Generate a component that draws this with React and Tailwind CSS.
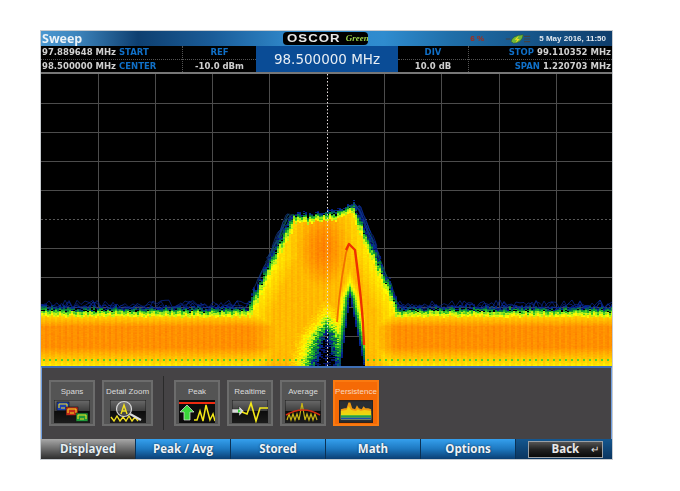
import React from "react";

const DV = "font-['DejaVu_Sans',sans-serif]";
const OS = "font-['Open_Sans',sans-serif]";

function rng(seed) {
  let s = seed;
  return () => {
    s = (s * 1664525 + 1013904223) % 4294967296;
    return s / 4294967296;
  };
}
const lerp = (a, b, t) => a + (b - a) * t;
const clamp = (v, a, b) => Math.max(a, Math.min(b, v));

const STOPS = [
  [0.03, [4, 14, 90]],
  [0.1, [6, 40, 150]],
  [0.17, [8, 120, 60]],
  [0.25, [40, 190, 40]],
  [0.32, [170, 240, 30]],
  [0.4, [255, 250, 0]],
  [0.5, [255, 222, 0]],
  [0.68, [255, 185, 0]],
  [0.85, [255, 150, 0]],
  [1, [252, 118, 0]],
];
function colour(t) {
  for (let i = 1; i < STOPS.length; i++) {
    if (t <= STOPS[i][0]) {
      const [a, ca] = STOPS[i - 1];
      const [b, cb] = STOPS[i];
      const k = clamp((t - a) / (b - a), 0, 1);
      return `rgb(${Math.round(lerp(ca[0], cb[0], k))},${Math.round(lerp(ca[1], cb[1], k))},${Math.round(lerp(ca[2], cb[2], k))})`;
    }
  }
  return "rgb(252,118,0)";
}

function redX(y) {
  const pts = [[244, 349], [250, 355], [323, 363], [366, 364]];
  if (y < 244) return 349;
  for (let i = 1; i < pts.length; i++) {
    if (y <= pts[i][0]) {
      const k = (y - pts[i - 1][0]) / (pts[i][0] - pts[i - 1][0]);
      return lerp(pts[i - 1][1], pts[i][1], k);
    }
  }
  return 364;
}

function envelope(x) {
  let top = 311;
  if (x > 247 && x <= 293) top = lerp(311, 217, (x - 247) / 46);
  else if (x > 293 && x <= 335) top = lerp(217, 214, (x - 293) / 42) + ((x % 7) / 7) * 3;
  else if (x > 335 && x <= 352) top = lerp(214, 207, (x - 335) / 17);
  else if (x > 352 && x <= 397) top = lerp(207, 311, (x - 352) / 45);
  return top;
}

function buildCells() {
  const r = rng(7);
  const buckets = {};
  for (let x = 41; x < 612; x += 2) {
    const slope = (x > 247 && x < 293) || (x > 352 && x < 397);
    const top = envelope(x) + (r() - 0.5) * (slope ? 5 : 2.5);
    const k0 = slope ? 2 : 1;
    const reach = (slope ? 13 : 7) * (0.35 + 0.65 * r());
    for (let y = 198; y < 366; y += 1) {
      let t;
      const n = r();
      const depth = y - top;
      if (depth < 0) {
        const k = -depth / reach;
        if (k > 1) continue;
        if (n < 0.15) continue;
        t = lerp(0.24, 0.05, k) + (n - 0.5) * 0.08;
      } else {
        let floor = 0;
        const fd = y - 311;
        if (fd >= 0) {
          let a;
          if (fd < 15) a = lerp(0.42, 0.86, fd / 15);
          else if (fd < 36) a = 0.88;
          else a = lerp(0.88, 0.46, (fd - 36) / 18);
          let att = 1;
          if (x > 250 && x < 300) att = lerp(1, 0.55, (x - 250) / 50);
          else if (x >= 300 && x <= 365) att = 0.55;
          else if (x > 365 && x < 395) att = lerp(0.55, 1, (x - 365) / 30);
          floor = a * att;
        }
        let body = 0;
        if (x > 247 && x < 397) {
          const lx = y < 311 ? x - (247 + (311 - y) * (46 / 94)) : x - 247;
          const rx = y < 311 ? 397 - (311 - y) * (45 / 104) - x : 397 - x;
          const d = Math.max(Math.min(lx, rx), 0);
          body = 0.4 + Math.min(d, 25) * 0.011;
          const cx = Math.exp(-((x - 322) ** 2) / 800 - ((y - 248) ** 2) / 2200);
          body = Math.max(body, 0.45 + cx * 0.48);
        }
        t = Math.max(floor, body);
        if (depth < 2.5 * k0) t = Math.min(t, 0.3);
        else if (depth < 5 * k0) t = Math.min(t, 0.38);
        const stripe = Math.sin((x / 6.3) * Math.PI * 2) * 0.04;
        t += stripe + (n - 0.5) * 0.05;

        if (y > 262 && x < redX(y) + 1) {
          const xL = 349 - (y - 297) * 0.132;
          const xR = 349 + (y - 297) * 0.206;
          let dx = Math.max(xL - x, x - xR);
          if (y < 297) dx = Math.abs(x - 349) + (297 - y) * 0.42;
          if (dx < 0) t = 0;
          else t = Math.min(t, 0.06 + dx * 0.05 + (n - 0.5) * 0.05);
        }
        if (y > 300) {
          const xL = 325 - (y - 335) * 0.3;
          const xR = 325 + (y - 335) * 0.3;
          let dx = Math.max(xL - x, x - xR);
          if (y < 335) dx = Math.abs(x - 326) + (335 - y) * 0.8;
          if (dx < 0) t = n < 0.35 ? 0.06 : 0;
          else t = Math.min(t, 0.05 + dx * 0.021 + (n - 0.5) * 0.16);
        }
        if (y >= 359 && y < 361 && x % 6 < 2 && t > 0.3) t = 0.28;
      }
      if (t < 0.03) continue;
      const key = Math.round(clamp(t, 0, 1) * 40);
      (buckets[key] = buckets[key] || []).push(`M${x} ${y}h2v1h-2z`);
    }
  }
  return Object.entries(buckets).map(([k, p]) => ({ fill: colour(k / 40), d: p.join("") }));
}

function buildTraces() {
  const r = rng(21);
  const out = [];
  const wig = (x0, x1, baseFn, amp, step = 4) => {
    const pts = [];
    for (let x = x0; x <= x1; x += step) pts.push(`${x},${(baseFn(x) - Math.pow(r(), 2) * amp).toFixed(1)}`);
    return pts.join(" ");
  };
  for (let i = 0; i < 4; i++) {
    out.push({ c: "#0a2a9a", p: wig(41, 250, () => 309, 9, 4) });
    out.push({ c: "#0a2a9a", p: wig(396, 612, () => 309, 9, 4) });
  }
  for (let i = 0; i < 16; i++) {
    const off = r() * 8;
    const a = 346 + Math.floor(r() * 30);
    out.push({ c: i % 5 === 0 ? "#0a6a40" : "#0c2f9c", p: wig(a, a + 16 + Math.floor(r() * 28), (x) => envelope(x - off), 4, 2) });
    const b = 250 + Math.floor(r() * 30);
    out.push({ c: i % 5 === 0 ? "#0a6a40" : "#123a86", p: wig(b, b + 12 + Math.floor(r() * 22), (x) => envelope(x + off * 0.8), 4, 2) });
  }
  return out;
}

const CELLS = buildCells();
const TRACES = buildTraces();
const VX = [98, 155, 212, 269, 384, 441, 499, 556];
const HY = [103, 132, 161, 190, 248, 277, 307, 336];

function Spectrum() {
  return (
    <svg viewBox="41 74 571 292" className="block w-[571px] h-[292px] bg-black shrink-0">
      {VX.map((x) => <line key={x} x1={x + 0.5} x2={x + 0.5} y1={74} y2={366} stroke="#4c4c4c" />)}
      {HY.map((y) => <line key={y} x1={41} x2={612} y1={y + 0.5} y2={y + 0.5} stroke="#4c4c4c" />)}
      <line x1={41} x2={612} y1={219.5} y2={219.5} stroke="#585858" strokeDasharray="2 2" />
      {TRACES.map((t, i) => <polyline key={i} points={t.p} fill="none" stroke={t.c} strokeWidth="0.7" />)}
      {CELLS.map((c) => <path key={c.fill} d={c.d} fill={c.fill} />)}
      <polyline points="337,322 339,300 342,277 346,253 349,244" fill="none" stroke="#f27000" strokeWidth="1.8" />
      <polyline points="346,250 349,244 355,250 358,274 361,300 363,323 364,345" fill="none" stroke="#ee3000" strokeWidth="2.4" strokeLinejoin="round" />
      <line x1={327.5} x2={327.5} y1={74} y2={366} stroke="#e6dede" strokeDasharray="1.5 2" />
    </svg>
  );
}

function Thumb({ children }) {
  return (
    <svg viewBox="0 0 36 23" className="w-[36px] h-[23px] block mt-[3px]">
      <defs>
        <linearGradient id="thumbbg" x1="0" y1="0" x2="0" y2="1">
          <stop offset="0" stopColor="#6a6a6a" />
          <stop offset="0.5" stopColor="#3c3c3c" />
          <stop offset="0.5" stopColor="#0c0c0c" />
          <stop offset="1" stopColor="#1c1c1c" />
        </linearGradient>
      </defs>
      <rect x="0" y="0" width="36" height="23" fill="url(#thumbbg)" stroke="#1a1a1a" />
      {children}
    </svg>
  );
}

function IconSpans() {
  const box = (x, y, c) => (
    <g>
      <rect x={x} y={y} width="12" height="8.5" fill={c} stroke="#111" strokeWidth="0.6" />
      <path d={`M${x + 2} ${y + 2}h8M${x + 2} ${y + 2}v4M${x + 10} ${y + 2}v4M${x + 4} ${y + 6}h4`} stroke="#f0dc20" strokeWidth="1.1" fill="none" />
    </g>
  );
  return <Thumb>{box(3, 2, "#1c3fb0")}{box(12, 7, "#c22a1a")}{box(22, 13, "#1f9a3a")}</Thumb>;
}
function IconZoom() {
  return (
    <Thumb>
      <polyline points="1,17 4,21 7,16 10,21 13,17 16,21 19,16 22,21 25,17 28,21" fill="none" stroke="#f2e020" strokeWidth="1.4" />
      <circle cx="14" cy="9" r="7.5" fill="#8a8a8a" fillOpacity="0.45" stroke="#d8d8d8" strokeWidth="1.2" />
      <path d="M11 14l3-9 3 9M12 11h4" fill="none" stroke="#f2e020" strokeWidth="1.4" />
      <line x1="20" y1="14" x2="31" y2="20" stroke="#dcdcdc" strokeWidth="2" />
    </Thumb>
  );
}
function IconPeak() {
  return (
    <Thumb>
      <rect x="0" y="0" width="36" height="23" fill="#0c0c0c" />
      <line x1="0" x2="36" y1="3" y2="3" stroke="#ee2a10" strokeWidth="2" />
      <path d="M8 5l7 7h-4v8H5v-8H1z" fill="#3ad83a" stroke="#e8e8e8" strokeWidth="0.7" />
      <polyline points="15,20 18,20 21,11 24,21 27,5 31,20 34,14 36,21" fill="none" stroke="#f4e818" strokeWidth="1.5" />
    </Thumb>
  );
}
function IconRealtime() {
  return (
    <Thumb>
      <path d="M0 9h7v-3l5 5-5 5v-3H0z" fill="#d8d8d8" stroke="#222" strokeWidth="0.5" />
      <path d="M6 9l3 2-3 2z" fill="#36d83a" />
      <polyline points="10,12 15,14 19,3 24,21 28,8 31,8 36,8" fill="none" stroke="#f4e818" strokeWidth="1.6" />
    </Thumb>
  );
}
function IconAverage() {
  return (
    <Thumb>
      <polyline points="2,20 4,14 6,20 8,14 10,20 12,14 14,20 17,3 20,20 22,14 24,20 26,14 28,20 30,14 32,20" fill="none" stroke="#c8b414" strokeWidth="1.2" />
      <path d="M1 15Q18 5 35 15" fill="none" stroke="#d42a10" strokeWidth="1.6" />
    </Thumb>
  );
}
function IconPersistence() {
  return (
    <svg viewBox="0 0 36 23" className="w-[34px] h-[23px] block mt-[3px]">
      <rect x="0" y="0" width="36" height="23" fill="#2b2f34" stroke="#1a1a1a" />
      <path d="M2 20V9L6 8 8 8 10 2 12 2 14 8 17 9 19 5 21 8 24 9 26 6 28 8 31 8 34 9V20Z" fill="#f09a10" />
      <path d="M2 20V11L8 10 10 6 13 10 18 11 20 9 23 11 27 10 34 11V20Z" fill="#f0d010" />
      <path d="M2 20V14L10 13 13 14 34 14V20Z" fill="#e8dc10" />
      <rect x="2" y="15.5" width="32" height="2.5" fill="#20a050" />
      <rect x="2" y="18" width="32" height="2" fill="#1a4cb0" />
    </svg>
  );
}

function Tool({ label, children, active, className = "" }) {
  return (
    <div
      className={`h-[46px] flex flex-col items-center pt-[4px] border-2 ${active ? "bg-[#f56a06] border-[#fa7a10] text-[#f8d8c0]" : "bg-[#545454] border-[#6c6c6c] text-[#dcdcdc]"} ${className}`}
    >
      <span className="text-[8px] leading-[11px] font-['Liberation_Sans',sans-serif] whitespace-nowrap">{label}</span>
      {children}
    </div>
  );
}

function Tab({ children, active }) {
  return (
    <div
      className={`w-[95px] h-full flex items-center justify-center text-[11.5px] font-bold ${OS} [text-shadow:0_0_2px_#102030] border-r border-[#0b3154] ${active ? "bg-gradient-to-b from-[#a8a8a8] via-[#6a6a6a] to-[#2e2e2e] text-[#e6eef2]" : "bg-gradient-to-b from-[#35a0ee] via-[#1d78c0] to-[#0a3f74] text-[#eef4fa]"}`}
    >
      {children}
    </div>
  );
}

function Cell({ top, bottom, className = "" }) {
  return (
    <div className={`flex flex-col text-[8.5px] font-bold ${DV} ${className}`}>
      <div className="h-[14px] leading-[13px] border-b border-dotted border-[#555] px-[1px] whitespace-nowrap">{top}</div>
      <div className="h-[13px] leading-[13px] px-[1px] whitespace-nowrap">{bottom}</div>
    </div>
  );
}

export default function App() {
  return (
    <div className="w-[680px] h-[491px] bg-white flex items-start pt-[31px] pl-[41px] overflow-hidden">
      <div className="w-[571px] h-[428px] flex flex-col bg-black blur-[0.45px] shadow-[0_0_0_1px_#c8ccd0]">
        {/* Title bar */}
        <div className="h-[15px] shrink-0 flex items-center bg-[linear-gradient(90deg,#4a97d0_0%,#3e86be_6%,#0e3f70_17%,#1a5c98_30%,#2d82c4_42%,#2f8ccf_60%,#1f6ea8_72%,#0e3d6c_100%)]">
          <div className={`w-[242px] pl-[1px] text-[12.5px] leading-[15px] font-bold text-[#eaf2f8] ${OS}`}>Sweep</div>
          <div className="w-[85px] h-[13px] bg-black rounded-[4px] flex items-center pl-[4px] overflow-hidden">
            <span className="origin-left scale-x-[1.32] text-[10px] leading-[13px] font-bold tracking-[0.8px] text-[#e8e8e8] font-['Liberation_Sans',sans-serif]">OSCOR</span>
            <span className="ml-[18px] text-[9px] leading-[13px] italic font-bold text-[#9ad04a] font-['Liberation_Serif',serif]">Green</span>
          </div>
          <div className="w-[116px] text-right text-[8px] font-bold text-[#b02a10] font-['Liberation_Sans',sans-serif]">6 %</div>
          <svg viewBox="0 0 30 12" className="w-[26px] h-[12px] ml-[21px] shrink-0">
            <path d="M1 6h5M22 3h7M22 6h7M22 9h7" stroke="#444" strokeWidth="1.4" />
            <path d="M7 9Q8 2 21 1 20 10 10 11Z" fill="#6fb83a" stroke="#2e5a1c" strokeWidth="0.6" />
            <path d="M16 2L11 7h3l-2 4 5-5h-3z" fill="#f0e020" />
          </svg>
          <div className="flex-1 text-right pr-[6px] text-[8px] text-[#e0e8f0] font-bold font-['Liberation_Sans',sans-serif] whitespace-nowrap">5 May 2016, 11:50</div>
        </div>

        {/* Readout row */}
        <div className="h-[28px] shrink-0 flex bg-black border-b-2 border-[#777] text-[#d0d0d0]">
          <Cell
            className="w-[142px] border-r border-dotted border-[#555]"
            top={<>97.889648 MHz <span className="text-[#1070c8]">START</span></>}
            bottom={<>98.500000 MHz <span className="text-[#1070c8]">CENTER</span></>}
          />
          <Cell
            className="w-[73px] text-center"
            top={<span className="text-[#1070c8]">REF</span>}
            bottom="-10.0 dBm"
          />
          <div className={`w-[142px] bg-[#0a4c96] flex items-center justify-center text-[13.5px] text-[#e8eef4] ${DV}`}>98.500000 MHz</div>
          <Cell
            className="w-[71px] text-center border-r border-dotted border-[#555]"
            top={<span className="text-[#1070c8]">DIV</span>}
            bottom="10.0 dB"
          />
          <Cell
            className="flex-1 text-right"
            top={<><span className="text-[#1070c8]">STOP</span> 99.110352 MHz</>}
            bottom={<><span className="text-[#1070c8]">SPAN</span> 1.220703 MHz</>}
          />
        </div>

        <Spectrum />

        {/* Tool panel */}
        <div className="h-[73px] shrink-0 bg-[#454345] border-t-2 border-[#3f6fb4] border-x border-x-[#6f9ee0] flex items-center pl-[7px] pb-[1px]">
          <Tool label="Spans" className="w-[46px]"><IconSpans /></Tool>
          <Tool label="Detail Zoom" className="w-[51px] ml-[7px]"><IconZoom /></Tool>
          <div className="w-px h-[54px] bg-[#2a2a2a] ml-[10px]" />
          <Tool label="Peak" className="w-[46px] ml-[10px]"><IconPeak /></Tool>
          <Tool label="Realtime" className="w-[46px] ml-[7px]"><IconRealtime /></Tool>
          <Tool label="Average" className="w-[46px] ml-[7px]"><IconAverage /></Tool>
          <Tool label="Persistence" active className="w-[46px] ml-[7px]"><IconPersistence /></Tool>
        </div>

        {/* Tabs */}
        <div className="h-[20px] shrink-0 flex items-stretch bg-[#0b3f70]">
          <Tab active>Displayed</Tab>
          <Tab>Peak / Avg</Tab>
          <Tab>Stored</Tab>
          <Tab>Math</Tab>
          <Tab>Options</Tab>
          <div className="flex-1 flex items-center justify-center pl-[2px] bg-gradient-to-b from-[#14578f] to-[#0a3560]">
            <div className={`w-[75px] h-[17px] flex items-center pl-[23px] gap-[12px] border border-[#9aa0a6] bg-gradient-to-b from-[#555] via-[#222] to-[#0a0a0a] text-[11.5px] font-bold text-[#e8e8e8] ${OS}`}>
              <span>Back</span>
              <span className="text-[10px] font-normal leading-none">↵</span>
            </div>
          </div>
        </div>
      </div>
    </div>
  );
}
